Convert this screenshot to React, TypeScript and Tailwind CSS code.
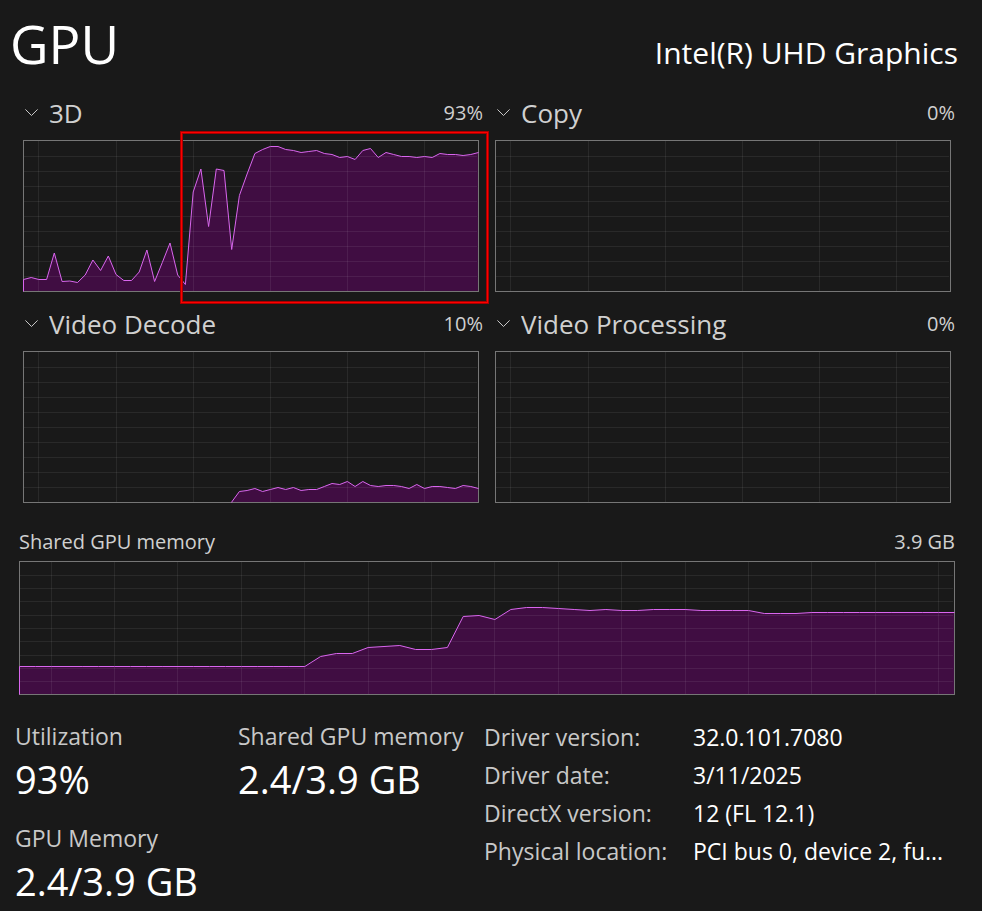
import { useId, useState } from 'react';

type Engine = '3D' | 'Copy' | 'Video Decode' | 'Video Processing';

const ENGINES: Engine[] = ['3D', 'Copy', 'Video Decode', 'Video Processing'];

// One sample per second, measured down from the top edge of the graph.
const SAMPLES: Record<Engine, number[]> = {
  '3D': [
    139.5, 137.5, 139.5, 139.5, 113, 141.5, 141, 142.5, 135, 120, 130.5, 116, 134.5, 140.5, 140.5, 132, 110, 141.5,
    122.5, 103, 135, 144.5, 52, 29, 86.5, 29, 30.5, 109.5, 55.5, 34, 13.5, 9.5, 6.5, 6.5, 9.5, 10.5, 12.5, 11.5, 10.5,
    13.5, 14.5, 17.5, 16.5, 19.5, 10.5, 8.5, 17.5, 12.5, 14.5, 16.5, 16.5, 17.5, 16.5, 17.5, 13.5, 14.5, 14.5, 15.5,
    14.5, 12.5,
  ],
  Copy: [],
  'Video Decode': [
    151, 140.5, 139.5, 137.5, 140.5, 138.5, 136.5, 138.5, 136.5, 139.5, 138.5, 138.5, 135.5, 132.5, 133.5, 130.5,
    135.5, 130.5, 134.5, 135.5, 134.5, 134.5, 135.5, 137.5, 133.5, 137.5, 135.5, 135.5, 136.5, 137.5, 134.5, 135.5,
    137.5,
  ],
  'Video Processing': [],
};

const LOAD: Record<Engine, string> = {
  '3D': '93%',
  Copy: '0%',
  'Video Decode': '10%',
  'Video Processing': '0%',
};

const MEMORY_SAMPLES = [
  ...Array<number>(19).fill(105.5),
  95.5, 92.5, 92.5, 86.5, 85.5, 84.5, 88.5, 88.5, 86.5, 55.5, 54.5, 58.5, 48.5, 46.5, 46.5, 47.5, 48.5, 49.5, 48.5,
  49.5, 49.5, 48.5, 48.5, 48.5, 49.5, 49.5, 49.5, 49.5, 52.5, 52.5, 52.5,
  ...Array<number>(10).fill(51.5),
];

const ENGINE_GRID = {
  xs: [15.5, 93.5, 170.5, 247.5, 324.5, 401.5],
  ys: [16.5, 31.5, 46.5, 61.5, 76.5, 91.5, 106.5, 121.5, 136.5],
};

const MEMORY_GRID = {
  xs: [32.5, 95.5, 158.5, 222.5, 285.5, 349.5, 412.5, 475.5, 539.5, 602.5, 666.5, 729.5, 792.5, 856.5, 919.5],
  ys: [14.5, 27.5, 40.5, 54.5, 67.5, 80.5, 94.5, 107.5, 120.5],
};

const DETAILS = [
  ['Driver version:', '32.0.101.7080'],
  ['Driver date:', '3/11/2025'],
  ['DirectX version:', '12 (FL 12.1)'],
  ['Physical location:', 'PCI bus 0, device 2, fu...'],
];

interface GraphProps {
  label: string;
  width: number;
  height: number;
  samples: number[];
  grid: { xs: number[]; ys: number[] };
}

function Graph({ label, width, height, samples, grid }: GraphProps) {
  const step = (width - 1) / 59;
  const first = 60 - samples.length;
  const points = samples.map((y, i) => `${(0.5 + (first + i) * step).toFixed(1)},${y}`);
  const bottom = height - 0.5;
  const start = `${(0.5 + first * step).toFixed(1)},${bottom}`;

  return (
    <svg
      role="img"
      aria-label={label}
      viewBox={`0 0 ${width} ${height}`}
      preserveAspectRatio="none"
      className="block h-auto w-full"
      fill="none"
    >
      {samples.length > 0 && (
        <polygon points={`${start} ${points.join(' ')} ${width - 0.5},${bottom}`} fill="#400d42" />
      )}
      <g stroke="#fff" strokeOpacity="0.07" shapeRendering="crispEdges">
        {grid.xs.map((x) => (
          <path key={x} d={`M${x} 1V${height - 1}`} />
        ))}
        {grid.ys.map((y) => (
          <path key={y} d={`M1 ${y}H${width - 2}`} />
        ))}
      </g>
      <rect x="0.5" y="0.5" width={width - 1} height={height - 1} stroke="#767676" />
      {samples.length > 0 && <polyline points={`${start} ${points.join(' ')}`} stroke="#d966ee" />}
    </svg>
  );
}

function EnginePanel({ initial, highlighted = false }: { initial: Engine; highlighted?: boolean }) {
  const [engine, setEngine] = useState<Engine>(initial);
  const id = useId();

  return (
    <div>
      <div className="flex h-[52px] items-center justify-between pb-0.5">
        <label htmlFor={id} className="flex items-center gap-[11px] pl-1.5">
          <svg width="13" height="8" viewBox="0 0 13 8" fill="none" stroke="#c8c8c8" aria-hidden="true">
            <path d="M0.4 0.4L6.5 6.5L12.6 0.4" />
          </svg>
          <select
            id={id}
            aria-label="Engine"
            value={engine}
            onChange={(e) => setEngine(e.target.value as Engine)}
            className="appearance-none bg-transparent text-[26px] leading-9 text-[#d0d0d0] outline-none"
          >
            {ENGINES.map((name) => (
              <option key={name} className="bg-[#2b2b2b]">
                {name}
              </option>
            ))}
          </select>
        </label>
        <span className="text-xl text-[#d0d0d0]">{LOAD[engine]}</span>
      </div>
      <div className="relative mx-1">
        <Graph label={engine} width={456} height={152} samples={SAMPLES[engine]} grid={ENGINE_GRID} />
        {highlighted && (
          <div className="pointer-events-none absolute -top-2 -right-[9px] -bottom-[11px] left-[158px] border border-[#ff0000] inset-ring-1 inset-ring-[#a80000] ring-1 ring-[#a80000]" />
        )}
      </div>
    </div>
  );
}

function Stat({ label, value }: { label: string; value: string }) {
  return (
    <div>
      <dt className="text-[23px] leading-9 text-[#c8c8c8]">{label}</dt>
      <dd className="text-[38px] leading-[50px]">{value}</dd>
    </div>
  );
}

export default function App() {
  return (
    <main className="min-h-screen bg-[#191919] font-['Open_Sans','Noto_Sans',sans-serif] whitespace-nowrap text-white">
      <header className="flex h-[88px] items-center justify-between pr-6 pl-2.5">
        <h1 className="text-[53px]">GPU</h1>
        <p className="pt-4 text-[30px]">Intel(R) UHD Graphics</p>
      </header>

      <section className="grid grid-cols-2 gap-x-2 gap-y-[7px] pr-[27px] pl-[19px]">
        <EnginePanel initial="3D" highlighted />
        <EnginePanel initial="Copy" />
        <EnginePanel initial="Video Decode" />
        <EnginePanel initial="Video Processing" />
      </section>

      <section className="mt-5 pr-[27px] pl-[19px]">
        <div className="flex h-[38px] items-center justify-between text-xl text-[#d0d0d0]">
          <h2>Shared GPU memory</h2>
          <span>3.9 GB</span>
        </div>
        <Graph label="Shared GPU memory" width={936} height={134} samples={MEMORY_SAMPLES} grid={MEMORY_GRID} />
      </section>

      <section className="flex pt-[23px] pr-6 pl-[15px]">
        <dl className="grid w-[469px] grid-cols-[223px_1fr] content-start gap-y-4">
          <Stat label="Utilization" value="93%" />
          <Stat label="Shared GPU memory" value="2.4/3.9 GB" />
          <Stat label="GPU Memory" value="2.4/3.9 GB" />
        </dl>
        <dl className="grid flex-1 grid-cols-[209px_1fr] content-start text-[23px] leading-[38px]">
          {DETAILS.map(([name, value]) => (
            <div key={name} className="contents">
              <dt className="text-[#c8c8c8]">{name}</dt>
              <dd>{value}</dd>
            </div>
          ))}
        </dl>
      </section>
    </main>
  );
}
